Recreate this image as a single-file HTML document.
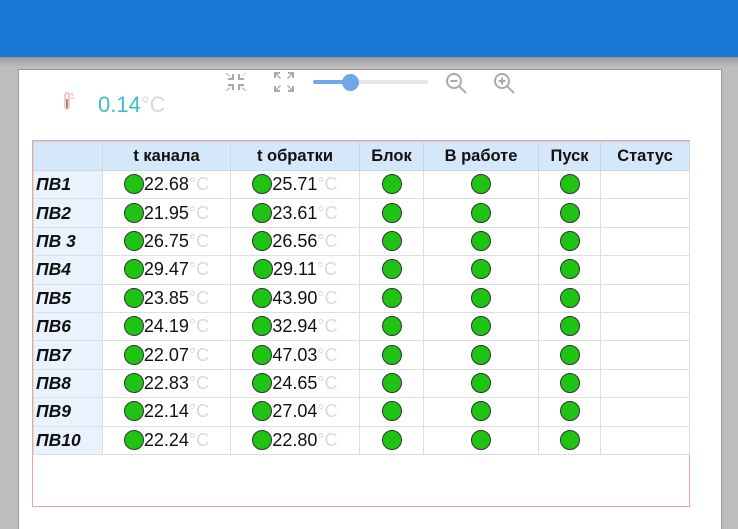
<!DOCTYPE html>
<html><head><meta charset="utf-8"><style>
*{margin:0;padding:0;box-sizing:border-box}
body{width:738px;height:517px;overflow:hidden;background:#bdbdbd;font-family:"Liberation Sans",Arial,sans-serif;position:relative}
.top{position:absolute;left:0;top:0;width:738px;height:57px;background:#1976d2}
.shade{position:absolute;left:0;top:57px;width:738px;height:10px;background:linear-gradient(#9a9a9a,#bdbdbd)}
.panel{position:absolute;left:18px;top:69px;width:704px;height:460px;background:#fff;border-left:1px solid #999;border-top:1px solid #999;border-right:1px solid #999}
.box{position:absolute;left:32px;top:140px;width:658px;height:367px;border:1px solid #f2a0a0}
table{position:absolute;left:33px;top:141px;border-collapse:collapse;table-layout:fixed}
td,th{border:1.5px solid #dedede;height:28.4px;text-align:center;font-size:18px;color:#111;white-space:nowrap;padding:0}
th{background:#d4e8fa;font-weight:bold;font-size:16.5px;height:29px;border-color:#c6d6e6}
td.n{background:#e8f3fd;text-align:left;font-weight:bold;font-style:italic;padding-left:2px;font-size:17.5px}
.c{display:inline-block;width:20px;height:20px;border-radius:50%;background:#1fc313;border:1.5px solid #333;vertical-align:-4px}
.u{color:#d9d9d9}
.ic{position:absolute}
</style></head><body>
<div class="top"></div><div class="shade"></div>
<div class="panel"></div>
<svg class="ic" style="left:58px;top:90px" width="20" height="22" viewBox="0 0 20 22"><rect x="7" y="3" width="4" height="16" rx="2" fill="none" stroke="#f3a8a8" stroke-width="1.2"/><rect x="8.2" y="9" width="1.6" height="9" fill="#777"/><path d="M12 5l3-2M12 8h4M13 3l2 3" stroke="#f3b8b8" stroke-width="1"/></svg>
<div class="ic" style="left:98px;top:92px;font-size:22px;color:#3cc0c0">0.14<span class="u">°C</span></div>
<svg class="ic" style="left:225px;top:71px" width="22" height="22" viewBox="0 0 22 22" fill="#aaa"><path d="M2 2l5 5V3h2v6H3V7h4L1 3zM20 2l-5 5V3h-2v6h6V7h-4l5-4zM2 20l5-5v4h2v-6H3v2h4l-6 4zM20 20l-5-5v4h-2v-6h6v2h-4l6 4z"/></svg>
<svg class="ic" style="left:273px;top:71px" width="22" height="22" viewBox="0 0 22 22" fill="#aaa"><path d="M1 1h6v2H4l4 4-1 1-4-4v3H1zM21 1h-6v2h3l-4 4 1 1 4-4v3h2zM1 21h6v-2H4l4-4-1-1-4 4v-3H1zM21 21h-6v-2h3l-4-4 1-1 4 4v-3h2z"/></svg>
<div class="ic" style="left:313px;top:80px;width:115px;height:4px;background:#e6e6e6;border-radius:2px"></div>
<div class="ic" style="left:313px;top:80px;width:37px;height:4px;background:#6ea8e6;border-radius:2px"></div>
<div class="ic" style="left:342px;top:74px;width:17px;height:17px;border-radius:50%;background:#6ea8e6"></div>
<svg class="ic" style="left:445px;top:72px" width="24" height="24" viewBox="0 0 24 24" fill="none" stroke="#aaa" stroke-width="2"><circle cx="9" cy="9" r="7"/><path d="M14 14l7 7M5.5 9h7"/></svg>
<svg class="ic" style="left:493px;top:72px" width="24" height="24" viewBox="0 0 24 24" fill="none" stroke="#aaa" stroke-width="2"><circle cx="9" cy="9" r="7"/><path d="M14 14l7 7M5.5 9h7M9 5.5v7"/></svg>
<div class="box"></div>
<table>
<colgroup><col style="width:69px"><col style="width:128px"><col style="width:129px"><col style="width:64px"><col style="width:115px"><col style="width:62px"><col style="width:89px"></colgroup>
<tr><th></th><th>t канала</th><th>t обратки</th><th>Блок</th><th>В работе</th><th>Пуск</th><th>Статус</th></tr>
<tr><td class="n">ПВ1</td><td><span class="c"></span>22.68<span class="u">°C</span></td><td><span class="c"></span>25.71<span class="u">°C</span></td><td><span class="c"></span></td><td><span class="c"></span></td><td><span class="c"></span></td><td></td></tr>
<tr><td class="n">ПВ2</td><td><span class="c"></span>21.95<span class="u">°C</span></td><td><span class="c"></span>23.61<span class="u">°C</span></td><td><span class="c"></span></td><td><span class="c"></span></td><td><span class="c"></span></td><td></td></tr>
<tr><td class="n">ПВ 3</td><td><span class="c"></span>26.75<span class="u">°C</span></td><td><span class="c"></span>26.56<span class="u">°C</span></td><td><span class="c"></span></td><td><span class="c"></span></td><td><span class="c"></span></td><td></td></tr>
<tr><td class="n">ПВ4</td><td><span class="c"></span>29.47<span class="u">°C</span></td><td><span class="c"></span>29.11<span class="u">°C</span></td><td><span class="c"></span></td><td><span class="c"></span></td><td><span class="c"></span></td><td></td></tr>
<tr><td class="n">ПВ5</td><td><span class="c"></span>23.85<span class="u">°C</span></td><td><span class="c"></span>43.90<span class="u">°C</span></td><td><span class="c"></span></td><td><span class="c"></span></td><td><span class="c"></span></td><td></td></tr>
<tr><td class="n">ПВ6</td><td><span class="c"></span>24.19<span class="u">°C</span></td><td><span class="c"></span>32.94<span class="u">°C</span></td><td><span class="c"></span></td><td><span class="c"></span></td><td><span class="c"></span></td><td></td></tr>
<tr><td class="n">ПВ7</td><td><span class="c"></span>22.07<span class="u">°C</span></td><td><span class="c"></span>47.03<span class="u">°C</span></td><td><span class="c"></span></td><td><span class="c"></span></td><td><span class="c"></span></td><td></td></tr>
<tr><td class="n">ПВ8</td><td><span class="c"></span>22.83<span class="u">°C</span></td><td><span class="c"></span>24.65<span class="u">°C</span></td><td><span class="c"></span></td><td><span class="c"></span></td><td><span class="c"></span></td><td></td></tr>
<tr><td class="n">ПВ9</td><td><span class="c"></span>22.14<span class="u">°C</span></td><td><span class="c"></span>27.04<span class="u">°C</span></td><td><span class="c"></span></td><td><span class="c"></span></td><td><span class="c"></span></td><td></td></tr>
<tr><td class="n">ПВ10</td><td><span class="c"></span>22.24<span class="u">°C</span></td><td><span class="c"></span>22.80<span class="u">°C</span></td><td><span class="c"></span></td><td><span class="c"></span></td><td><span class="c"></span></td><td></td></tr>
</table>
</body></html>
